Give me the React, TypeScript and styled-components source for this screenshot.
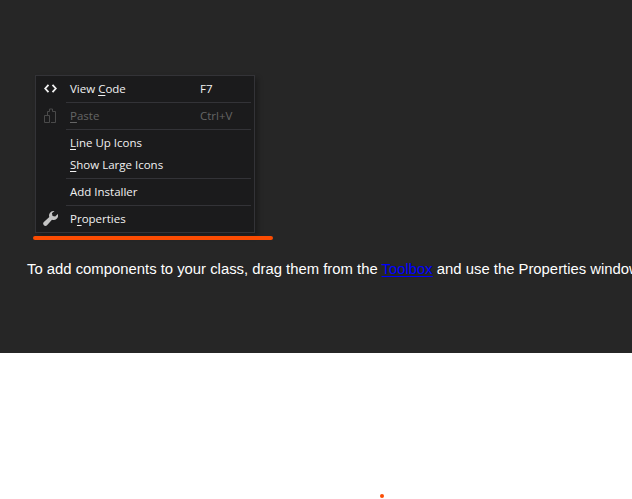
import styled, { createGlobalStyle } from 'styled-components';

const GlobalStyle = createGlobalStyle`
  html, body {
    margin: 0;
    padding: 0;
    height: 499px;
    overflow: hidden;
    background: #ffffff;
  }
`;

const Page = styled.div`
  width: 632px;
  height: 499px;
  overflow: hidden;
`;

const DarkSection = styled.section`
  height: 353px;
  padding: 75px 0 0 0;
  box-sizing: border-box;
  background: #262626;
`;

const Menu = styled.div`
  width: 220px;
  height: 158px;
  margin-left: 35px;
  padding: 2px 1px;
  box-sizing: border-box;
  background: #1b1b1c;
  border: 1px solid #333337;
  box-shadow: 3px 3px 5px rgba(0, 0, 0, 0.3);
  font-family: 'Open Sans', 'Noto Sans', sans-serif;
  font-size: 11.5px;
`;

const Row = styled.div<{ $disabled?: boolean }>`
  height: 22px;
  padding-bottom: 1px;
  box-sizing: border-box;
  display: flex;
  align-items: center;
  color: ${(p) => (p.$disabled ? '#656565' : '#f1f1f1')};
`;

const IconSlot = styled.span`
  width: 26px;
  margin-right: 7px;
  display: flex;
  justify-content: center;
  flex-shrink: 0;
`;

const Label = styled.span`
  width: 130px;
  u {
    text-underline-offset: 2px;
  }
`;

const Shortcut = styled.span``;

const Separator = styled.div`
  height: 1px;
  margin: 2px 2px 2px 29px;
  background: #333337;
`;

const OrangeStroke = styled.div`
  width: 240px;
  height: 4px;
  margin: 3px 0 0 33px;
  border-radius: 2px;
  background: #fc4c02;
`;

const Paragraph = styled.p`
  margin: 19px 0 0 27px;
  white-space: nowrap;
  color: #ffffff;
  font-family: 'Liberation Sans', Arial, sans-serif;
  font-size: 14.85px;
  line-height: 20px;
`;

const ToolLink = styled.a`
  color: #0000ff;
  text-decoration: underline;
  text-underline-offset: 2px;
`;

const WhiteSection = styled.section`
  height: 146px;
  padding-top: 141px;
  box-sizing: border-box;
`;

const Dot = styled.div`
  width: 4px;
  height: 4px;
  margin-left: 380px;
  border-radius: 50%;
  background: #fc4c02;
`;

const App = () => (
  <Page>
    <GlobalStyle />
    <DarkSection>
      <Menu>
        <Row>
          <IconSlot>
            <svg width="13" height="9" viewBox="0 0 13 9" fill="none" stroke="#f1f1f1" strokeWidth="1.8">
              <path d="M4.500.8 1.200 4.500l3.300 3.700M8.500.8l3.300 3.700-3.300 3.700" />
            </svg>
          </IconSlot>
          <Label>
            View <u>C</u>ode
          </Label>
          <Shortcut>F7</Shortcut>
        </Row>
        <Separator />
        <Row $disabled>
          <IconSlot>
            <svg width="12" height="15" viewBox="0 0 12 15" fill="none" stroke="#4a4a4a">
              <path d="M.5 7.500h5v7h-5zM3.500 7V3.500h2V1h3v2.500h3v11H7" />
            </svg>
          </IconSlot>
          <Label>
            <u>P</u>aste
          </Label>
          <Shortcut>Ctrl+V</Shortcut>
        </Row>
        <Separator />
        <Row>
          <IconSlot />
          <Label>
            <u>L</u>ine Up Icons
          </Label>
        </Row>
        <Row>
          <IconSlot />
          <Label>
            <u>S</u>how Large Icons
          </Label>
        </Row>
        <Separator />
        <Row>
          <IconSlot />
          <Label>Add Installer</Label>
        </Row>
        <Separator />
        <Row>
          <IconSlot>
            <svg width="15" height="15" viewBox="0 0 15 15" fill="#c4c4c4">
              <path d="M10.500 0a4.500 4.500 0 0 0-4.200 6L.6 11.200a2.300 2.300 0 0 0 3.200 3.200L9 8.700A4.500 4.500 0 0 0 14.800 3l-2.600 2.600-2.600-.7-.7-2.600L11.500.1A4.500 4.500 0 0 0 10.500 0z" />
            </svg>
          </IconSlot>
          <Label>
            P<u>r</u>operties
          </Label>
        </Row>
      </Menu>
      <OrangeStroke />
      <Paragraph>
        To add components to your class, drag them from the <ToolLink>Toolbox</ToolLink> and use the Properties window
      </Paragraph>
    </DarkSection>
    <WhiteSection>
      <Dot />
    </WhiteSection>
  </Page>
);

export default App;
